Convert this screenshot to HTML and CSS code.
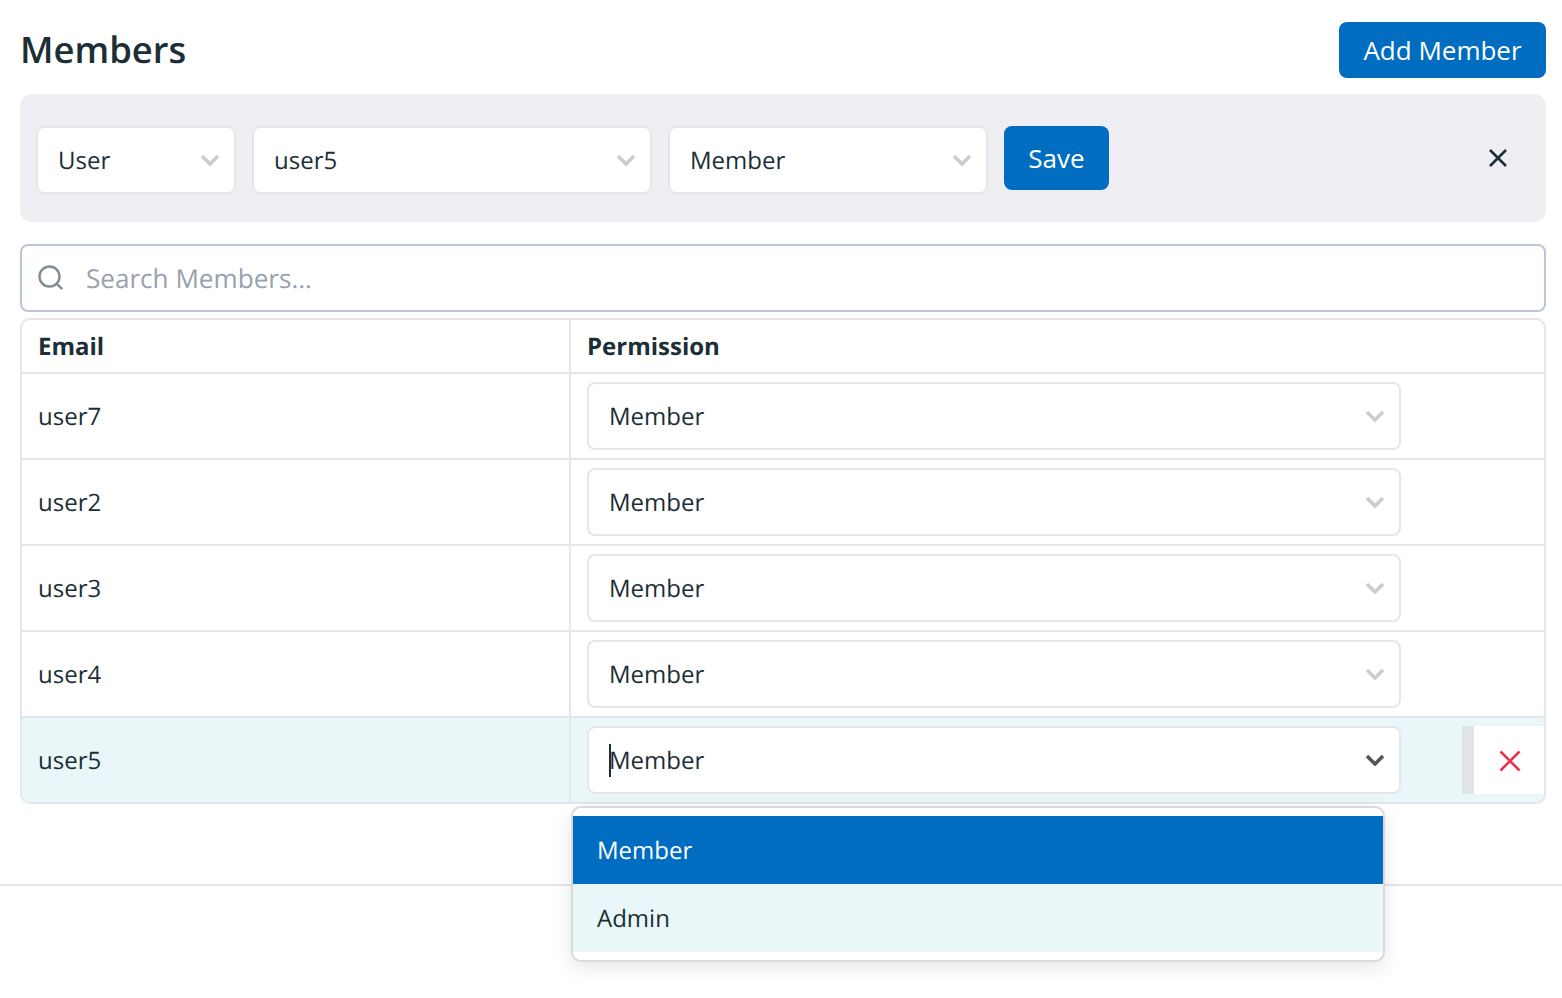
FILE: index.html
```html
<!DOCTYPE html>
<html lang="en">
<head>
<meta charset="utf-8">
<title>Members</title>
<link rel="stylesheet" href="styles.css">
</head>
<body>
<main class="page">
  <header class="head">
    <h1 class="title">Members</h1>
    <button class="btn btn-add">Add Member</button>
  </header>
  <section class="panel">
    <div class="select s-type"><span class="val">User</span><svg class="chev" viewBox="0 0 20 12"><path d="M2 2l8 8 8-8"/></svg></div>
    <div class="select s-user"><span class="val">user5</span><svg class="chev" viewBox="0 0 20 12"><path d="M2 2l8 8 8-8"/></svg></div>
    <div class="select s-perm"><span class="val">Member</span><svg class="chev" viewBox="0 0 20 12"><path d="M2 2l8 8 8-8"/></svg></div>
    <button class="btn btn-save">Save</button>
    <svg class="close" viewBox="0 0 20 20"><path d="M2 2l16 16M18 2L2 18"/></svg>
  </section>
  <div class="search">
    <svg class="search-ic" viewBox="0 0 26 26"><circle cx="11.500" cy="11.500" r="10"/><path d="M18.800 18.800l5.400 5.400"/></svg>
    <span class="ph">Search Members...</span>
  </div>
  <div class="table">
    <div class="row row-head"><div class="c1">Email</div><div class="c2">Permission</div></div>
    <div class="row"><div class="c1">user7</div><div class="c2"><div class="select s-row"><span class="val">Member</span><svg class="chev" viewBox="0 0 20 12"><path d="M2 2l8 8 8-8"/></svg></div></div></div>
    <div class="row"><div class="c1">user2</div><div class="c2"><div class="select s-row"><span class="val">Member</span><svg class="chev" viewBox="0 0 20 12"><path d="M2 2l8 8 8-8"/></svg></div></div></div>
    <div class="row"><div class="c1">user3</div><div class="c2"><div class="select s-row"><span class="val">Member</span><svg class="chev" viewBox="0 0 20 12"><path d="M2 2l8 8 8-8"/></svg></div></div></div>
    <div class="row"><div class="c1">user4</div><div class="c2"><div class="select s-row"><span class="val">Member</span><svg class="chev" viewBox="0 0 20 12"><path d="M2 2l8 8 8-8"/></svg></div></div></div>
    <div class="row row-active">
      <div class="c1">user5</div>
      <div class="c2">
        <div class="select s-row"><span class="val val-caret">Member</span><svg class="chev chev-dark" viewBox="0 0 20 12"><path d="M2 2l8 8 8-8"/></svg></div>
        <div class="del"><svg class="del-ic" viewBox="0 0 22 22"><path d="M1.500 1.500l19 19M20.500 1.500l-19 19"/></svg></div>
        <ul class="menu">
          <li class="opt opt-on">Member</li>
          <li class="opt opt-hover">Admin</li>
        </ul>
      </div>
    </div>
  </div>
  <footer class="foot"></footer>
</main>
</body>
</html>
```
FILE: styles.css
```css
* { box-sizing: border-box; }
html, body { margin: 0; padding: 0; background: #fff; }
body {
  font-family: "Open Sans", "Noto Sans", "Liberation Sans", sans-serif;
  font-size: 24px;
  line-height: 32px;
  color: #1c2e36;
  height: 998px;
  overflow: hidden;
  text-rendering: geometricPrecision;
}
.page { display: flex; flex-direction: column; padding-top: 22px; }
.head {
  display: flex; justify-content: space-between; align-items: center;
  margin: 0 16px 16px 20px; height: 56px;
}
.title { margin: 0 0 2px; font-size: 36.4px; font-weight: 600; line-height: 52px; }
.btn {
  font: inherit; color: #fff; background: #006dc1; border: 0; border-radius: 8px;
  display: flex; align-items: center; justify-content: center;
}
.btn-add { width: 207px; height: 56px; font-size: 26px; }
.btn-save { width: 105px; height: 64px; font-size: 26px; }
.panel {
  margin: 0 16px 0 20px; height: 128px; background: #eeeef3; border-radius: 12px;
  display: flex; align-items: center; padding: 0 38px 0 16px; gap: 16px;
}
.select {
  display: flex; align-items: center; justify-content: space-between;
  height: 68px; background: #fff; border: 2px solid #e3e7eb; border-radius: 8px;
  padding: 0 14px 0 20px; flex: none;
}
.val { padding-top: 2px; }
.panel .select { margin-top: 4px; }
.s-type { width: 200px; }
.s-user { width: 400px; }
.s-perm { width: 320px; }
.s-row { width: 814px; }
.chev { width: 20px; height: 12px; fill: none; stroke: #ccc; stroke-width: 3.6; }
.chev-dark { stroke: #555; }
.close { width: 20px; height: 20px; margin-left: auto; fill: none; stroke: #1c2e36; stroke-width: 2.6; }
.search {
  margin: 22px 16px 0 20px; height: 68px; border: 2px solid #b9c6d8; border-radius: 8px;
  display: flex; align-items: center; padding: 0 16px;
}
.search-ic { width: 26px; height: 26px; fill: none; stroke: #818c93; stroke-width: 2.4; }
.ph { margin-left: 22px; color: #98a1af; font-size: 26.1px; }
.table {
  margin: 6px 16px 0 20px; height: 486px; border: 2px solid #e3e7eb; border-radius: 10px;
  display: flex; flex-direction: column;
}
.row { display: flex; height: 86px; border-top: 2px solid #e3e7eb; flex: none; }
.row-head { height: 52px; border-top: 0; font-weight: 700; }
.row-head .c2 { padding-top: 2px; }
.c1 { width: 549px; padding: 2px 0 0 16px; display: flex; align-items: center; border-right: 2px solid #e3e7eb; flex: none; }
.c2 { flex: 1; padding-left: 16px; display: flex; align-items: center; position: relative; }
.row-active { background: #eaf7f9; border-radius: 0 0 8px 8px; }
.val-caret { position: relative; }
.val-caret::before {
  content: ""; position: absolute; left: 0; top: 1px; bottom: 0; width: 2px; background: #1c2e36;
}
.del {
  position: absolute; right: 0; top: 8px; width: 82px; height: 68px;
  background: #fff; border-left: 12px solid #e0e4e7; padding: 2px 0 0 2px;
  display: flex; align-items: center; justify-content: center;
}
.del-ic { width: 22px; height: 22px; fill: none; stroke: #e8324e; stroke-width: 2.6; }
.menu {
  position: absolute; left: 0; top: 88px; width: 814px; height: 156px;
  margin: 0; padding: 8px 0; list-style: none; background: #fff;
  border: 2px solid #d9d9dc; border-radius: 10px;
  box-shadow: 0 6px 20px rgba(0, 0, 0, 0.1);
  z-index: 2;
}
.opt { height: 68px; display: flex; align-items: center; padding: 2px 0 0 24px; }
.opt-on { background: #006dc1; color: #fff; }
.opt-hover { background: #eaf7f9; }
.foot { margin-top: 80px; height: 2px; background: #e3e7eb; }
```
